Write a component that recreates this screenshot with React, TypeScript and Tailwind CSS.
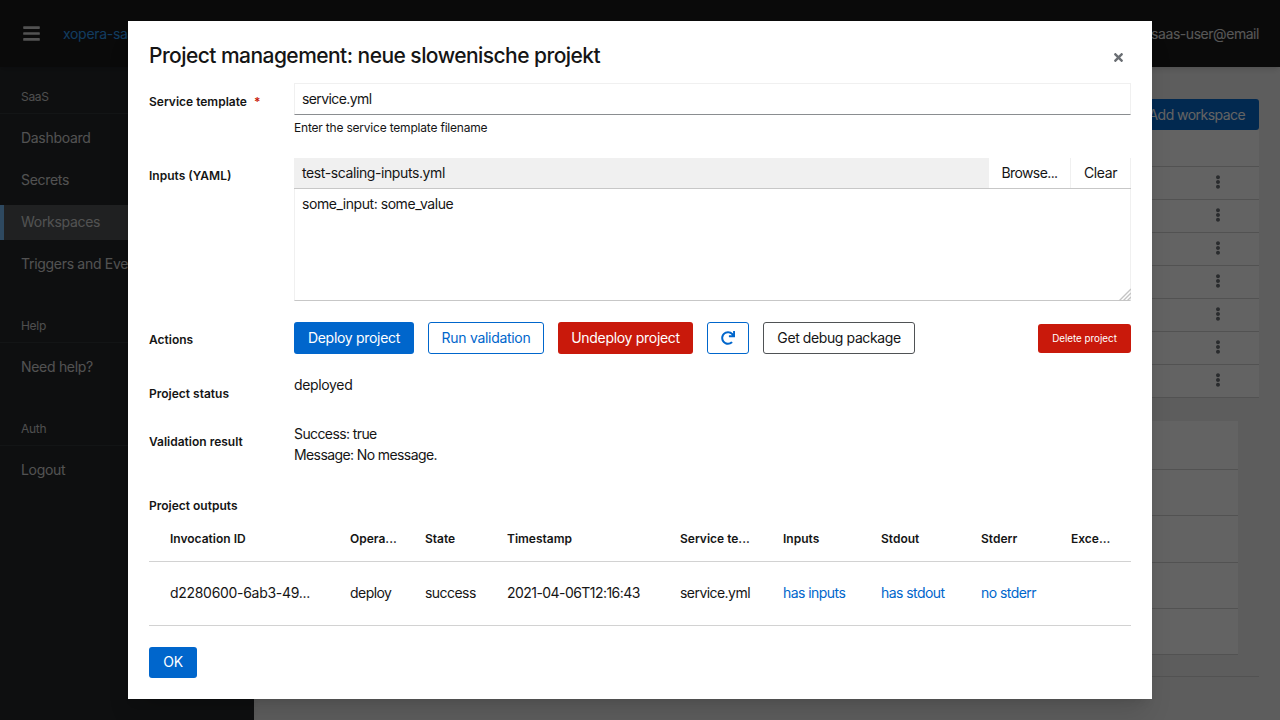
import { FaBars, FaEllipsisV, FaRedo, FaTimes } from "react-icons/fa";

const SIDEBAR = [
  { title: "SaaS", items: ["Dashboard", "Secrets", "Workspaces", "Triggers and Events"] },
  { title: "Help", items: ["Need help?"] },
  { title: "Auth", items: ["Logout"] },
];

const COLUMNS = [
  { label: "Invocation ID", value: "d2280600-6ab3-49...", width: "w-[201px]", first: true },
  { label: "Opera...", value: "deploy", width: "w-[75px]" },
  { label: "State", value: "success", width: "w-[82px]" },
  { label: "Timestamp", value: "2021-04-06T12:16:43", width: "w-[173px]" },
  { label: "Service te...", value: "service.yml", width: "w-[103px]" },
  { label: "Inputs", value: "has inputs", width: "w-[98px]", link: true },
  { label: "Stdout", value: "has stdout", width: "w-[100px]", link: true },
  { label: "Stderr", value: "no stderr", width: "w-[90px]", link: true },
  { label: "Exce...", value: "", width: "w-[60px]" },
];

// ─── Page behind the modal ────────────────────────────────────────────────────

function Background() {
  return (
    <div className="isolate flex h-[720px] flex-col overflow-hidden bg-[#f0f0f0]">
      <header className="z-10 flex h-[67px] shrink-0 items-center justify-between bg-[#151515] pl-[22px] pr-[21px] text-sm shadow-md">
        <div className="flex items-center gap-[22px]">
          <FaBars className="h-[19px] w-[19px] text-[#d2d2d2]" />
          <span className="text-[#2b9af3]">xopera-saas-ui</span>
        </div>
        <span className="tracking-[-0.45px] text-[#e0e0e0]">xopera-saas-user@email</span>
      </header>
      <div className="flex min-h-0 flex-1">
        <aside className="z-[5] w-[254px] shrink-0 bg-[#212427] shadow-lg">
          {SIDEBAR.map((group) => (
            <div key={group.title} className="mb-[14px]">
              <div className="flex h-[47px] items-end border-b border-[#2f3235] px-[21px] pb-[8px] text-xs text-[#c7c7c7]">
                {group.title}
              </div>
              <div className="pt-[7px]">
                {group.items.map((item) => (
                  <div
                    key={item}
                    className={
                      item === "Workspaces"
                        ? "mb-[7px] flex h-[35px] items-center border-l-4 border-[#73bcf7] bg-[#4f5255] pb-[1px] pl-[17px] text-sm text-[#d2d2d2]"
                        : "mb-[7px] flex h-[35px] items-center pb-[1px] pl-[21px] text-sm whitespace-nowrap text-[#d2d2d2]"
                    }
                  >
                    {item}
                  </div>
                ))}
              </div>
            </div>
          ))}
        </aside>
        <main className="min-w-0 flex-1 pr-[21px] pt-[32px]">
          <div className="flex justify-end">
            <div className="flex h-[31px] items-center rounded-[3px] bg-[#0066cc] px-[14px] text-sm tracking-[-0.55px] text-white">
              Add workspace
            </div>
          </div>
          <div className="ml-[20px] bg-white">
            <div className="h-[37px] border-b border-[#d2d2d2]" />
            {[0, 1, 2, 3, 4, 5, 6].map((row) => (
              <div key={row} className="flex h-[33px] items-center justify-end border-b border-[#d2d2d2] pb-[2px] pr-[34px]">
                <FaEllipsisV className="h-[14px] w-[14px] text-[#6a6e73]" />
              </div>
            ))}
          </div>
          <div className="ml-[20px] mr-[21px] mt-[23px] bg-white">
            <div className="h-[49px] border-b border-[#d2d2d2]" />
            <div className="h-[46px] border-b border-[#d2d2d2]" />
            <div className="h-[47px] border-b border-[#d2d2d2]" />
            <div className="h-[46px] border-b border-[#d2d2d2]" />
            <div className="h-[46px] border-b border-[#d2d2d2]" />
          </div>
          <div className="ml-[20px] mt-[21px] border-b border-[#d2d2d2]" />
        </main>
      </div>
    </div>
  );
}

// ─── Modal ────────────────────────────────────────────────────────────────────

function Label({ children, className }: { children: React.ReactNode; className?: string }) {
  return <div className={`text-[12px] font-semibold tracking-normal text-[#151515] ${className ?? ""}`}>{children}</div>;
}

function ProjectModal() {
  return (
    <div className="absolute left-[128px] top-[21px] flex h-[678px] w-[1024px] flex-col bg-white px-[21px] text-sm text-[#151515] shadow-xl">
      <div className="flex h-[62px] shrink-0 items-center justify-between pt-[8px]">
        <h1 className="text-[21px] font-medium tracking-[-0.55px] text-[#151515]">
          Project management: neue slowenische projekt
        </h1>
        <FaTimes className="mr-[7px] mt-[2px] h-[13px] w-[11px] text-[#6a6e73]" />
      </div>

      <div className="flex h-[75px] shrink-0">
        <Label className="w-[145px] pt-[10px]">
          Service template <span className="ml-[4px] text-[#c9190b]">*</span>
        </Label>
        <div className="flex-1">
          <div className="flex h-[32px] items-center border border-[#f0f0f0] border-b-[#8a8d90] px-[7px] tracking-[-0.6px]">
            service.yml
          </div>
          <div className="mt-[5px] text-[12px] leading-[16px] tracking-[-0.2px]">Enter the service template filename</div>
        </div>
      </div>

      <div className="flex h-[164px] shrink-0">
        <Label className="w-[145px] pt-[9px]">Inputs (YAML)</Label>
        <div className="flex-1">
          <div className="flex h-[31px] border-b border-[#c7c7c7] tracking-[-0.4px]">
            <div className="flex flex-1 items-center bg-[#f0f0f0] px-[8px]">test-scaling-inputs.yml</div>
            <div className="flex w-[82px] items-center justify-center border-r border-[#f0f0f0] tracking-[-0.6px]">Browse...</div>
            <div className="flex w-[60px] items-center justify-center border-r border-[#f0f0f0]">Clear</div>
          </div>
          <div className="relative">
            <textarea
              readOnly
              value="some_input: some_value"
              className="block h-[112px] w-full resize-none border border-t-0 border-[#f0f0f0] border-b-[#c7c7c7] px-[7px] py-[5px] tracking-[-0.45px] outline-none"
            />
            {/* resize grip */}
            <svg className="absolute bottom-0 right-0 h-[13px] w-[13px]" viewBox="0 0 13 13" stroke="#c4c4c4" strokeWidth="1.4">
              <path d="M1 13 13 1M5 13l8-8M9 13l4-4" />
            </svg>
          </div>
        </div>
      </div>

      <div className="flex h-[32px] shrink-0 items-center">
        <Label className="w-[145px] pt-[4px]">Actions</Label>
        <div className="flex flex-1 items-center gap-[14px]">
          <button className="h-[32px] w-[120px] rounded-[3px] bg-[#0066cc] text-white">Deploy project</button>
          <button className="h-[32px] w-[116px] rounded-[3px] border border-[#0066cc] text-[#0066cc]">Run validation</button>
          <button className="h-[32px] w-[135px] rounded-[3px] bg-[#c9190b] text-white">Undeploy project</button>
          <button className="flex h-[32px] w-[42px] items-center justify-center rounded-[3px] border border-[#0066cc] text-[#0066cc]">
            <FaRedo className="h-[14px] w-[14px]" />
          </button>
          <button className="h-[32px] w-[152px] rounded-[3px] border border-[#4f5255] tracking-[-0.4px]">Get debug package</button>
          <button className="ml-auto mt-[1px] h-[29px] w-[93px] rounded-[3px] bg-[#c9190b] text-[9.8px] tracking-normal text-white">Delete project</button>
        </div>
      </div>

      <div className="mt-[21px] flex h-[42px] shrink-0">
        <Label className="w-[145px] pt-[10px]">Project status</Label>
        <div className="leading-[20px] tracking-[-0.35px]">deployed</div>
      </div>

      <div className="mt-[6px] flex h-[64px] shrink-0">
        <Label className="w-[145px] pt-[10px]">Validation result</Label>
        <div className="leading-[21px] tracking-[-0.6px]">
          <div>Success: true</div>
          <div>Message: No message.</div>
        </div>
      </div>

      <Label className="mt-[10px] h-[17px] shrink-0">Project outputs</Label>

      <table className="mt-[-1px] w-full table-fixed border-collapse">
        <thead>
          <tr className="h-[48px] border-b border-[#d2d2d2] text-[12px] font-semibold tracking-normal">
            {COLUMNS.map((col) => (
              <th key={col.label} className={`${col.width} ${col.first ? "pl-[21px]" : ""} pt-[4px] text-left font-semibold`}>
                {col.label}
              </th>
            ))}
          </tr>
        </thead>
        <tbody className="tracking-[-0.55px]">
          <tr className="h-[64px] border-b border-[#d2d2d2]">
            {COLUMNS.map((col) => (
              <td
                key={col.label}
                className={`${col.first ? "pl-[21px] tracking-[-0.3px]" : ""} ${col.link ? "text-[#0066cc]" : ""} whitespace-nowrap`}
              >
                {col.value}
              </td>
            ))}
          </tr>
        </tbody>
      </table>

      <button className="mt-[21px] h-[31px] w-[48px] rounded-[3px] bg-[#0066cc] text-white">OK</button>
    </div>
  );
}

export default function App() {
  return (
    <div className="relative h-[720px] w-[1280px] overflow-hidden font-['Inter','Liberation_Sans',sans-serif] tracking-[-0.3px]">
      <Background />
      <div className="absolute inset-0 bg-[#030303]/[0.62]" />
      <ProjectModal />
    </div>
  );
}
